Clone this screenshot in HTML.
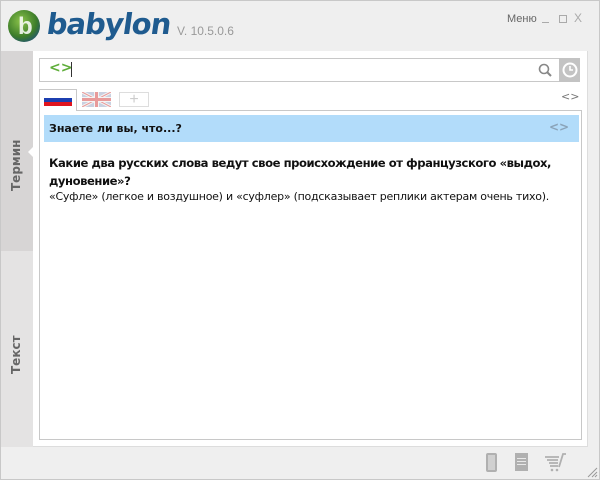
<!DOCTYPE html>
<html><head><meta charset="utf-8"><style>
*{margin:0;padding:0;box-sizing:border-box}
body{width:600px;height:480px;background:#efefef;font-family:"DejaVu Sans","Liberation Sans",sans-serif;position:relative;overflow:hidden;border:1px solid #c8c8c8}
.abs{position:absolute}
</style></head><body>
<div class="abs" style="left:7px;top:9px;width:32px;height:32px;border-radius:50%;background:radial-gradient(circle at 40% 35%,#8bc34a,#3d7d2a 55%,#1e4f7a 85%)"></div>
<div class="abs" style="left:17px;top:12px;color:#fff;font:bold 24px 'Liberation Sans',sans-serif;opacity:.85">b</div>
<div class="abs" style="left:46px;top:6px;color:#1f5b8f;font:bold 29px 'DejaVu Sans',sans-serif;letter-spacing:-1px;transform:skewX(-8deg)">babylon</div>
<div class="abs" style="left:176px;top:23px;color:#999;font:12px 'Liberation Sans',sans-serif">V. 10.5.0.6</div>
<div class="abs" style="left:506px;top:12px;color:#666;font:11px 'Liberation Sans',sans-serif">Меню</div>
<div class="abs" style="left:541px;top:21px;width:7px;height:1px;background:#aaa"></div>
<div class="abs" style="left:558px;top:14px;width:8px;height:8px;border:1px solid #aaa"></div>
<div class="abs" style="left:573px;top:10px;color:#aaa;font:12px 'Liberation Sans',sans-serif">X</div>
<div class="abs" style="left:0;top:50px;width:32px;height:200px;background:#d7d5d5"></div>
<div class="abs" style="left:0;top:250px;width:32px;height:196px;background:#e4e3e3"></div>
<div class="abs" style="transform:rotate(-90deg);transform-origin:0 0;font:bold 12px 'DejaVu Sans',sans-serif;color:#666;white-space:nowrap;left:8px;top:190px">Термин</div>
<div class="abs" style="left:8px;top:373px;transform:rotate(-90deg);transform-origin:0 0;font:bold 12px 'DejaVu Sans',sans-serif;color:#666;white-space:nowrap">Текст</div>
<div class="abs" style="left:32px;top:50px;width:555px;height:396px;background:#fff;border-right:1px solid #ddd;border-bottom:1px solid #ddd"></div>
<div class="abs" style="left:27px;top:145px;width:0;height:0;border-top:6px solid transparent;border-bottom:6px solid transparent;border-right:6px solid #fff"></div>
<div class="abs" style="left:38px;top:57px;width:521px;height:24px;border:1px solid #c8c8c8;background:#fff"></div>
<div class="abs" style="left:48px;top:59px;color:#5fae3a;font:bold 14px 'DejaVu Sans',sans-serif">&lt;&gt;</div>
<div class="abs" style="left:70px;top:61px;width:1px;height:15px;background:#333"></div>
<svg class="abs" style="left:537px;top:62px" width="14" height="14"><circle cx="6" cy="6" r="4.5" fill="none" stroke="#888" stroke-width="1.6"/><line x1="9.5" y1="9.5" x2="13" y2="13" stroke="#888" stroke-width="2"/></svg>
<div class="abs" style="left:558px;top:57px;width:21px;height:24px;background:#c3c3c3"></div>
<svg class="abs" style="left:561px;top:61px" width="16" height="16"><circle cx="8" cy="8" r="6.5" fill="none" stroke="#fff" stroke-width="2"/><path d="M8 4v4h3" fill="none" stroke="#fff" stroke-width="1.6"/></svg>
<div class="abs" style="left:38px;top:88px;width:38px;height:22px;border:1px solid #c8c8c8;border-bottom:none;background:#fff"></div>
<div class="abs" style="left:43px;top:93px;width:28px;height:12px;background:linear-gradient(#fff 0 33%,#1c3fb0 33% 66%,#e0141e 66%)"></div>
<svg class="abs" style="left:81px;top:91px" width="29" height="15"><rect width="29" height="15" fill="#c9d0e0"/><path d="M0 0L29 15M29 0L0 15" stroke="#f4f4f4" stroke-width="3"/><path d="M0 0L29 15M29 0L0 15" stroke="#e89a9a" stroke-width="1"/><path d="M14.5 0v15M0 7.5h29" stroke="#f4f4f4" stroke-width="5"/><path d="M14.5 0v15M0 7.5h29" stroke="#e89a9a" stroke-width="3"/></svg>
<div class="abs" style="left:118px;top:91px;width:30px;height:15px;border:1px solid #ddd;color:#ccc;font:16px 'Liberation Sans';text-align:center;line-height:13px">+</div>
<div class="abs" style="left:560px;top:89px;color:#777;font:11px 'DejaVu Sans',sans-serif">&lt;&gt;</div>
<div class="abs" style="left:38px;top:109px;width:543px;height:330px;border:1px solid #c8c8c8"></div>
<div class="abs" style="left:39px;top:108px;width:36px;height:3px;background:#fff"></div>
<div class="abs" style="left:43px;top:114px;width:535px;height:27px;background:#b2dcfa"></div>
<div class="abs" style="left:48px;top:121px;font:bold 11px 'DejaVu Sans',sans-serif;color:#111">Знаете ли вы, что...?</div>
<div class="abs" style="left:548px;top:119px;color:#8aa3b8;font:bold 12px 'DejaVu Sans',sans-serif">&lt;&gt;</div>
<div class="abs" style="left:48px;top:153px;width:530px;font:bold 11.6px/18px 'DejaVu Sans',sans-serif;color:#111;letter-spacing:-0.45px">Какие два русских слова ведут свое происхождение от французского «выдох, дуновение»?</div>
<div class="abs" style="left:48px;top:189px;font:11px 'DejaVu Sans',sans-serif;color:#111;white-space:nowrap;letter-spacing:-0.25px">«Суфле» (легкое и воздушное) и «суфлер» (подсказывает реплики актерам очень тихо).</div>
<div class="abs" style="left:485px;top:452px;width:11px;height:19px;border:2px solid #b0b0b0;border-radius:2px;background:#d0d0d0"></div>
<div class="abs" style="left:514px;top:452px;width:13px;height:18px;background:#b0b0b0"></div>
<div class="abs" style="left:516px;top:457px;width:9px;height:9px;background:repeating-linear-gradient(#e8e8e8 0 1px,transparent 1px 3px)"></div>
<svg class="abs" style="left:543px;top:451px" width="22" height="20"><path d="M1 5h14M3 8h11M5 11h9M6 14h8" stroke="#b0b0b0" stroke-width="1.8"/><path d="M15 15L19 2h3" fill="none" stroke="#b0b0b0" stroke-width="1.8"/><circle cx="8" cy="18" r="1.3" fill="#b0b0b0"/><circle cx="13" cy="18" r="1.3" fill="#b0b0b0"/></svg>
<svg class="abs" style="left:585px;top:465px" width="12" height="12"><path d="M11 2L2 11M11 6L6 11M11 9L9 11" stroke="#999" stroke-width="1"/></svg>
</body></html>
